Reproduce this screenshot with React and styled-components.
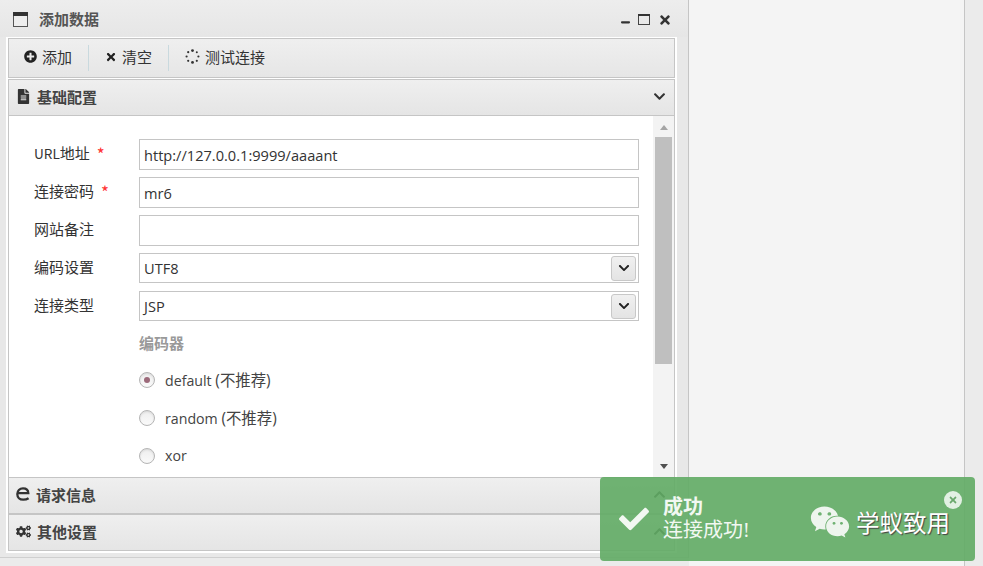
import React from 'react';
import styled, { createGlobalStyle } from 'styled-components';
import {
  FaPlusCircle,
  FaTimes,
  FaFileAlt,
  FaChevronDown,
  FaChevronUp,
  FaCogs,
  FaCheck,
  FaWeixin,
  FaWindowMinimize,
} from 'react-icons/fa';

const FONT = '"Open Sans", "Noto Sans CJK SC", sans-serif';
const CJK = '"Noto Sans CJK SC", sans-serif';
const BORDER = '#c5c5c5';

const GlobalStyle = createGlobalStyle`
  html, body {
    margin: 0;
    padding: 0;
    height: 100%;
    overflow: hidden;
    background: #ebebeb;
    font-family: ${FONT};
    font-size: 14px;
    color: #333;
  }
  * {
    box-sizing: border-box;
  }
`;

const WindowGlyph = () => (
  <svg width="15" height="15" viewBox="0 0 15 15">
    <rect x="0.5" y="0.5" width="14" height="14" fill="#eee" stroke="#555" />
    <rect x="0" y="0" width="15" height="4" fill="#333" />
  </svg>
);

const MaximizeGlyph = () => (
  <svg width="12" height="11" viewBox="0 0 12 11">
    <rect x="0.5" y="0.5" width="11" height="10" fill="none" stroke="#444" />
    <rect x="0" y="0" width="12" height="2" fill="#333" />
  </svg>
);

const SpinnerGlyph = () => (
  <svg width="15" height="15" viewBox="0 0 15 15" fill="#333">
    <circle cx="7.5" cy="1.6" r="1.4" />
    <circle cx="11.8" cy="3.2" r="1" />
    <circle cx="13.4" cy="7.5" r="1.1" />
    <circle cx="11.8" cy="11.8" r="1.1" />
    <circle cx="7.5" cy="13.4" r="1.4" />
    <circle cx="3.2" cy="11.8" r="1.1" />
    <circle cx="1.6" cy="7.5" r="1.1" />
    <circle cx="3.2" cy="3.2" r="1.1" />
  </svg>
);

const EdgeGlyph = () => (
  <svg width="14" height="14" viewBox="0 0 14 14" fill="none" stroke="#333" strokeWidth="2.3">
    <path d="M2 6.2 H12.3 C12.2 3.2 10.2 1.4 7 1.4 C3.6 1.4 1.3 3.8 1.3 7 C1.3 10.4 3.6 12.7 7.2 12.7 C9.2 12.7 11 12.3 12.6 11.2" />
  </svg>
);

const App = () => (
  <Page>
    <GlobalStyle />
    <Win>
      <TitleBar>
        <WindowGlyph />
        <WinTitle>添加数据</WinTitle>
        <WinButtons>
          <FaWindowMinimize size={9} />
          <MaximizeGlyph />
          <FaTimes size={14} />
        </WinButtons>
      </TitleBar>
      <WinBody>
        <Toolbar>
          <ToolButton>
            <FaPlusCircle size={13} />
            添加
          </ToolButton>
          <ToolDivider />
          <ToolButton>
            <FaTimes size={12} />
            清空
          </ToolButton>
          <ToolDivider />
          <ToolButton>
            <SpinnerGlyph />
            测试连接
          </ToolButton>
        </Toolbar>
        <AccordionHeader>
          <FaFileAlt size={15} />
          <span>基础配置</span>
          <FaChevronDown size={13} className="chev" />
        </AccordionHeader>
        <Content>
          <Form>
            <Row>
              <Label>
                <LatinPart>URL</LatinPart>地址<Required>*</Required>
              </Label>
              <TextInput readOnly value="http://127.0.0.1:9999/aaaant" />
            </Row>
            <Row>
              <Label>
                连接密码<Required>*</Required>
              </Label>
              <TextInput readOnly value="mr6" />
            </Row>
            <Row>
              <Label>网站备注</Label>
              <TextInput readOnly value="" />
            </Row>
            <Row>
              <Label>编码设置</Label>
              <SelectBox>
                UTF8
                <SelectArrow>
                  <FaChevronDown size={12} />
                </SelectArrow>
              </SelectBox>
            </Row>
            <Row>
              <Label>连接类型</Label>
              <SelectBox>
                JSP
                <SelectArrow>
                  <FaChevronDown size={12} />
                </SelectArrow>
              </SelectBox>
            </Row>
            <GroupLabel>编码器</GroupLabel>
            <RadioRow>
              <Radio $checked />
              <RadioText>
                default <RadioHint>(不推荐)</RadioHint>
              </RadioText>
            </RadioRow>
            <RadioRow>
              <Radio />
              <RadioText>
                random <RadioHint>(不推荐)</RadioHint>
              </RadioText>
            </RadioRow>
            <RadioRow>
              <Radio />
              <RadioText>xor</RadioText>
            </RadioRow>
          </Form>
          <ScrollBar>
            <ScrollArrow $up />
            <ScrollThumb />
            <ScrollArrow />
          </ScrollBar>
        </Content>
        <AccordionHeader>
          <EdgeGlyph />
          <span>请求信息</span>
          <FaChevronUp size={13} className="chev" />
        </AccordionHeader>
        <AccordionHeader>
          <FaCogs size={15} />
          <span>其他设置</span>
          <FaChevronUp size={13} className="chev" />
        </AccordionHeader>
      </WinBody>
    </Win>
    <SidePanel />
    <Toast>
      <FaCheck size={30} className="check" />
      <ToastText>
        <ToastTitle>成功</ToastTitle>
        <ToastMessage>连接成功!</ToastMessage>
      </ToastText>
      <Brand>
        <FaWeixin size={40} />
        <BrandName>学蚁致用</BrandName>
      </Brand>
      <ToastClose>
        <FaTimes size={10} />
      </ToastClose>
    </Toast>
  </Page>
);

const Page = styled.div`
  position: relative;
  display: flex;
  align-items: flex-start;
  width: 983px;
  height: 566px;
  overflow: hidden;
  background: #ebebeb;
`;

const Win = styled.div`
  width: 689px;
  height: 558px;
  flex: none;
  border-right: 1px solid ${BORDER};
  border-bottom: 1px solid #cfcfcf;
  background: #e8e8e8;
`;

const TitleBar = styled.div`
  display: flex;
  align-items: center;
  height: 37px;
  padding: 2px 16px 0 13px;
  background: linear-gradient(#ededed, #e6e6e6);
`;

const WinTitle = styled.span`
  margin-left: 11px;
  padding-bottom: 3px;
  font-family: ${CJK};
  font-size: 15px;
  font-weight: bold;
  color: #555;
`;

const WinButtons = styled.div`
  display: flex;
  align-items: center;
  gap: 8px;
  margin-left: auto;
  color: #333;
`;

const WinBody = styled.div`
  display: flex;
  flex-direction: column;
  width: 671px;
  height: 516px;
  margin-left: 6px;
  padding: 1px 2px 0;
  background: #fff;
`;

const Toolbar = styled.div`
  display: flex;
  align-items: center;
  height: 40px;
  flex: none;
  margin-bottom: 1px;
  padding: 0 0 3px 15px;
  border: 1px solid ${BORDER};
  background: linear-gradient(#efefef, #e6e6e6);
`;

const ToolButton = styled.div`
  display: flex;
  align-items: center;
  gap: 5px;
  padding: 0 16px 0 0;
  color: #333;
  font-family: ${CJK};
  font-size: 15px;

  svg {
    color: #222;
  }

  & + div + & {
    padding-left: 16px;
  }
`;

const ToolDivider = styled.div`
  width: 1px;
  height: 26px;
  margin-top: 3px;
  background: #c9d9de;
`;

const AccordionHeader = styled.div`
  display: flex;
  align-items: center;
  flex: none;
  height: 37px;
  padding: 0 8px 3px 7px;
  border: 1px solid ${BORDER};
  background: linear-gradient(#efefef, #e5e5e5);
  color: #444;
  font-family: ${CJK};
  font-weight: bold;
  font-size: 15px;

  > span {
    margin-left: 6px;
  }

  svg {
    flex: none;
    color: #333;
  }

  .chev {
    margin-left: auto;
  }
`;

const Content = styled.div`
  display: flex;
  height: 361px;
  flex: none;
  border-left: 1px solid ${BORDER};
  border-right: 1px solid ${BORDER};
  overflow: hidden;
  background: #fff;
`;

const Form = styled.div`
  flex: 1;
  min-width: 0;
  padding: 23px 5px 0 25px;
`;

const Row = styled.div`
  display: flex;
  align-items: flex-start;
  height: 38px;
`;

const Label = styled.label`
  width: 105px;
  flex: none;
  padding-top: 3px;
  color: #333;
  font-family: ${CJK};
  font-size: 15px;
  line-height: 22px;
`;

const LatinPart = styled.span`
  font-size: 13.6px;
`;

const Required = styled.span`
  margin-left: 7px;
  color: #f33;
  font-size: 17px;
  line-height: 0;
  vertical-align: -2px;
`;

const TextInput = styled.input`
  width: 500px;
  height: 31px;
  padding: 0 4px;
  border: 1px solid ${BORDER};
  border-radius: 0;
  outline: none;
  background: #fff;
  color: #333;
  font-family: ${FONT};
  font-size: 14.6px;
`;

const SelectBox = styled.div`
  display: flex;
  align-items: center;
  justify-content: space-between;
  width: 500px;
  height: 30px;
  padding: 0 2px 0 4px;
  border: 1px solid ${BORDER};
  background: #fff;
  color: #333;
  font-size: 14.6px;
`;

const SelectArrow = styled.span`
  display: flex;
  align-items: center;
  justify-content: center;
  width: 25px;
  height: 25px;
  border: 1px solid #c8c8c8;
  border-radius: 3px;
  background: linear-gradient(#f0f0f0, #e4e4e4);
  color: #222;
`;

const GroupLabel = styled.div`
  margin: 5px 0 0 105px;
  height: 27px;
  color: #999;
  font-family: ${CJK};
  font-weight: bold;
  font-size: 15px;
  line-height: 18px;
`;

const RadioRow = styled.div`
  display: flex;
  align-items: center;
  height: 38px;
  margin-left: 105px;
  color: #444;
  font-size: 14.2px;
`;

const RadioText = styled.span`
  padding-bottom: 2px;
`;

const RadioHint = styled.span`
  font-size: 15.4px;
`;

const Radio = styled.span`
  display: flex;
  align-items: center;
  justify-content: center;
  width: 16px;
  height: 16px;
  margin-right: 10px;
  border: 1px solid #b5b5b5;
  border-radius: 50%;
  background: linear-gradient(#eee, #fafafa);
  box-shadow: inset 0 1px 2px rgba(0, 0, 0, 0.1);

  &::after {
    content: '';
    display: ${(p) => (p.$checked ? 'block' : 'none')};
    width: 6px;
    height: 6px;
    border-radius: 50%;
    background: #9c6a7a;
  }
`;

const ScrollBar = styled.div`
  display: flex;
  flex-direction: column;
  align-items: center;
  justify-content: space-between;
  width: 21px;
  flex: none;
  padding-bottom: 8px;
  background: #f3f3f3;
`;

const ScrollArrow = styled.span`
  width: 0;
  height: 0;
  margin-top: ${(p) => (p.$up ? '9px' : '0')};
  border-left: 4px solid transparent;
  border-right: 4px solid transparent;
  border-bottom: ${(p) => (p.$up ? '5px solid #a5a5a5' : '0')};
  border-top: ${(p) => (p.$up ? '0' : '5px solid #505050')};
`;

const ScrollThumb = styled.div`
  width: 17px;
  height: 227px;
  margin: 0 0 93px;
  background: #bfbfbf;
`;

const SidePanel = styled.div`
  width: 276px;
  height: 566px;
  flex: none;
  border-right: 1px solid ${BORDER};
  background: #f4f4f4;
`;

const Toast = styled.div`
  position: absolute;
  left: 600px;
  top: 477px;
  display: flex;
  align-items: center;
  width: 375px;
  height: 84px;
  padding: 0 0 0 19px;
  border-radius: 4px;
  background: rgba(97, 171, 100, 0.9);
  color: #fff;

  .check {
    flex: none;
    color: #f2f8f2;
  }
`;

const ToastText = styled.div`
  width: 96px;
  flex: none;
  margin-left: 14px;
  font-family: "Liberation Serif", "Noto Sans CJK SC", serif;
  font-size: 20px;
  line-height: 23px;
  color: #f2f8f2;
`;

const ToastTitle = styled.div`
  font-weight: bold;
`;

const ToastMessage = styled.div``;

const Brand = styled.div`
  display: flex;
  align-items: center;
  gap: 6px;
  margin-left: 51px;
  margin-top: 6px;

  svg {
    color: #eef5ee;
  }
`;

const BrandName = styled.span`
  font-size: 23.5px;
  color: #fff;
  text-shadow: 1px 1px 1px #444;
  white-space: nowrap;
`;

const ToastClose = styled.div`
  position: absolute;
  left: 344px;
  top: 14px;
  display: flex;
  align-items: center;
  justify-content: center;
  width: 18px;
  height: 18px;
  border-radius: 50%;
  background: rgba(255, 255, 255, 0.8);
  color: #6aa86c;
`;

export default App;
